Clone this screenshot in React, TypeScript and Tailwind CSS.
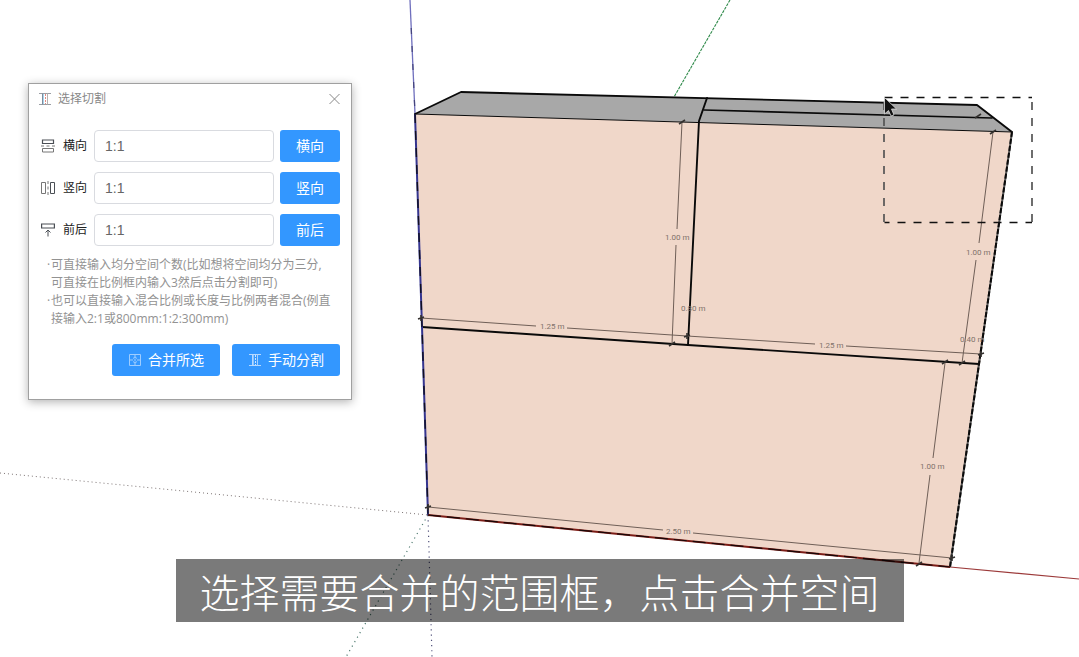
import React, { useState } from 'react';

type Point = [number, number];

const DIMENSION_LINES: [Point, Point][] = [
  [[682, 122], [677, 229]],
  [[676, 245], [672, 344]],
  [[993, 132], [979, 243]],
  [[976, 260], [962, 363]],
  [[945, 363], [933, 458]],
  [[930, 475], [919, 563]],
  [[421, 318], [536, 326]],
  [[567, 328], [687, 336]],
  [[687, 336], [815, 344]],
  [[846, 346], [981, 354]],
  [[428, 507], [663, 530]],
  [[693, 533], [952, 558]],
];

const TICKS: Point[] = [
  [682, 122], [672, 344], [993, 132], [978, 116], [962, 363], [945, 362], [919, 564],
];

const NODES: Point[] = [
  [421, 318], [687, 336], [981, 354], [428, 507], [952, 558],
];

const LABELS: { x: number; y: number; text: string }[] = [
  { x: 665, y: 240, text: '1.00 m' },
  { x: 966, y: 255, text: '1.00 m' },
  { x: 920, y: 469, text: '1.00 m' },
  { x: 540, y: 329, text: '1.25 m' },
  { x: 819, y: 348, text: '1.25 m' },
  { x: 666, y: 534, text: '2.50 m' },
  { x: 681, y: 311, text: '0.80 m' },
  { x: 960, y: 342, text: '0.40 m' },
];

function Scene() {
  return (
    <svg
      className="absolute inset-0 h-full w-full"
      viewBox="0 0 1079 657"
      preserveAspectRatio="xMinYMin slice"
      fill="none"
      aria-hidden="true"
    >
      <path d="M410 0 415 114" stroke="#6f6fbd" strokeWidth="1.3" />
      <path d="M411.200 28 415 114" stroke="#44447c" strokeWidth="1.2" strokeDasharray="6 12" />
      <path d="M730 0 674 97" stroke="#2f8a4a" strokeWidth="1.1" strokeDasharray="3 1" />
      <path d="M0 473 428 515" stroke="#7d7474" strokeDasharray="1 3" />
      <path d="M428 515 346 657" stroke="#4f7a70" strokeWidth="1.2" strokeDasharray="1.2 4" />
      <path d="M428 515 432 657" stroke="#50507a" strokeWidth="1.2" strokeDasharray="1.2 4" />
      <path d="M950 567 1079 579" stroke="#9c3a3a" strokeWidth="1.1" />

      <path d="M415 114 1012 132 980 364 950 567 428 515Z" fill="#f0d7c9" />
      <path d="M415 114 461 92 977 105 1012 132Z" fill="#a8a8a8" />

      <g stroke="#0a0a0a" strokeLinejoin="round" strokeLinecap="round">
        <path d="M415 114 461 92 977 105 1012 132" strokeWidth="1.9" />
        <path d="M415 114 1012 132" strokeWidth="1" />
        <path d="M704 110 992 118" strokeWidth="1.7" />
        <path d="M707 98 699 121 688 345" strokeWidth="1.9" />
        <path d="M422 327 688 345 979 364" strokeWidth="1.9" />
      </g>
      <path d="M1012 132 979 364 950 567" stroke="#555" strokeWidth="2" />
      <path d="M1012 132 979 364 950 567" stroke="#0a0a0a" strokeWidth="2" strokeDasharray="5 2" />
      <path d="M415 114 422 327 428 515" stroke="#35358f" strokeWidth="2" />
      <path d="M415 114 422 327 428 515" stroke="#101022" strokeWidth="1.4" strokeDasharray="9 8" />
      <path d="M428 515 950 567" stroke="#7c1c16" strokeWidth="2" />
      <path d="M428 515 950 567" stroke="#180808" strokeWidth="1.2" strokeDasharray="13 6" />

      <g stroke="#6f5f57" strokeWidth="1">
        {DIMENSION_LINES.map(([a, b]) => (
          <path key={a.join() + b.join()} d={`M${a[0]} ${a[1]} ${b[0]} ${b[1]}`} />
        ))}
      </g>
      <g stroke="#33302e" strokeWidth="1.6">
        {TICKS.map(([x, y]) => (
          <path key={`${x}-${y}`} d={`M${x - 3} ${y + 2}L${x + 3} ${y - 2}`} />
        ))}
        {NODES.map(([x, y]) => (
          <path key={`${x}-${y}`} d={`M${x - 3} ${y + 1}L${x + 3} ${y - 1}M${x} ${y - 3}V${y + 3}`} />
        ))}
      </g>
      <g
        fill="#80726a"
        className="text-[8px]"
        fontFamily="Roboto, 'Noto Sans', sans-serif"
      >
        {LABELS.map((l) => (
          <text key={`${l.x}-${l.y}`} x={l.x} y={l.y}>{l.text}</text>
        ))}
      </g>

      <path d="M884.5 97.5H1032" stroke="#111" strokeWidth="1.4" strokeDasharray="8 8" />
      <path d="M884.5 222.500H1032" stroke="#111" strokeWidth="1.4" strokeDasharray="8 8" strokeDashoffset="3" />
      <path d="M884 102V222" stroke="#555" strokeWidth="1.7" strokeDasharray="8 8" />
      <path d="M1032 102V222" stroke="#555" strokeWidth="1.7" strokeDasharray="8 8" />
      <path
        d="M884.500 97.500V114L888.500 110.500 891 116 894 115 891.500 109H896.500Z"
        fill="#111"
        stroke="#ddd"
        strokeWidth=".8"
      />
    </svg>
  );
}

function BeamIcon({ light = false }: { light?: boolean }) {
  return (
    <svg className="h-3.5 w-3.5 shrink-0" viewBox="0 0 14 14" fill="none" aria-hidden="true">
      <path d="M1 1.500H13M1 12.500H13" stroke={light ? '#b5d8ff' : '#9a9ea4'} />
      <path d="M4.500 1.500V12.500" stroke={light ? '#b5d8ff' : '#7d8c9c'} />
      <path d="M5.500 2V12" stroke={light ? '#8cc4ff' : '#a9d4ee'} />
      <path d="M7.500 2V12" stroke={light ? '#cce4ff' : '#e58a80'} strokeDasharray="2 1" />
      <path d="M9.500 1.500V12.500" stroke={light ? '#a5d0ff' : '#b5b0b0'} />
    </svg>
  );
}

function MergeIcon() {
  return (
    <svg className="h-3.5 w-3.5 shrink-0" viewBox="0 0 14 14" fill="none" stroke="#9fcdff" aria-hidden="true">
      <path d="M1.500 1.500H12.500V12.500H1.500ZM1.500 7H5M9 7H12.500M7 1.500V4M7 10V12.500" />
      <path d="M5 5.500 7 4 9 5.500M5 8.500 7 10 9 8.500M7 5.500V8.500" />
    </svg>
  );
}

function HorizontalIcon() {
  return (
    <svg className="h-3.5 w-3.5 shrink-0" viewBox="0 0 14 14" fill="none" stroke="#4b4f55" aria-hidden="true">
      <path d="M1.500 1H12.500V4.500H1.500Z" strokeWidth="1.2" />
      <path d="M1.500 9.500H12.500V13H1.500Z" stroke="#777" />
      <path d="M0 7H3M5.500 7H8.500M11 7H14" stroke="#777" />
    </svg>
  );
}

function VerticalIcon() {
  return (
    <svg className="h-3.5 w-3.5 shrink-0" viewBox="0 0 14 14" fill="none" stroke="#4b4f55" aria-hidden="true">
      <path d="M.5 1.500H4.500V12.500H.5Z" stroke="#777" />
      <path d="M9.500 1.500H13.500V12.500H9.500Z" />
      <path d="M7 0V3M7 5.500V8.500M7 11V14" stroke="#777" />
    </svg>
  );
}

function DepthIcon() {
  return (
    <svg className="h-3.5 w-3.5 shrink-0" viewBox="0 0 14 14" fill="none" stroke="#4b4f55" aria-hidden="true">
      <path d="M.6 1H13.400V5H.6Z" strokeWidth="1.2" />
      <path d="M7 13.500V7.500M4.500 9.500 7 7 9.500 9.500" />
    </svg>
  );
}

const ROWS = [
  { id: 'horizontal', label: '横向', icon: <HorizontalIcon /> },
  { id: 'vertical', label: '竖向', icon: <VerticalIcon /> },
  { id: 'depth', label: '前后', icon: <DepthIcon /> },
];

const BUTTON = 'flex h-8 items-center justify-center rounded-[3px] bg-[#3397ff] text-sm text-white';

function SplitRow({ id, label, icon }: { id: string; label: string; icon: React.ReactNode }) {
  const [ratio, setRatio] = useState('1:1');
  return (
    <div className="flex items-center">
      <label htmlFor={id} className="flex w-[53px] shrink-0 items-center gap-2 text-xs text-[#222]">
        {icon}
        {label}
      </label>
      <input
        id={id}
        value={ratio}
        onChange={(e) => setRatio(e.target.value)}
        className="mr-1.5 h-8 min-w-0 flex-1 rounded border border-[#d9dbe0] bg-white px-2.5 font-['Liberation_Sans',sans-serif] text-sm text-[#666] outline-none"
      />
      <button type="button" className={`${BUTTON} w-15 shrink-0`}>{label}</button>
    </div>
  );
}

function SplitDialog() {
  return (
    <section
      aria-label="选择切割"
      className="absolute top-[83px] left-7 w-[324px] border border-[#a0a0a0] bg-white pr-[11px] pb-[23px] pl-3 shadow-[0_2px_9px_rgba(0,0,0,0.3)]"
    >
      <header className="-ml-[3px] flex h-[30px] items-center text-xs text-[#888]">
        <BeamIcon />
        <h1 className="ml-1.5">选择切割</h1>
        <button type="button" aria-label="关闭" className="ml-auto text-[#888]">
          <svg className="h-4 w-3" viewBox="0 0 12 16" fill="none" stroke="currentColor" aria-hidden="true">
            <path d="M1.500 3 11.500 13M11.500 3 1.500 13" />
          </svg>
        </button>
      </header>
      <div className="mt-4 flex flex-col gap-2.5">
        {ROWS.map((r) => (
          <SplitRow key={r.id} {...r} />
        ))}
      </div>
      <ul className="mt-2.5 pl-2.5 text-xs leading-[18px] whitespace-nowrap text-[#929292]">
        <li className="relative">
          <span className="absolute -left-1">·</span>
          可直接输入均分空间个数(比如想将空间均分为三分,
          <br />
          可直接在比例框内输入3然后点击分割即可)
        </li>
        <li className="relative">
          <span className="absolute -left-1">·</span>
          也可以直接输入混合比例或长度与比例两者混合(例直
          <br />
          接输入2:1或800mm:1:2:300mm)
        </li>
      </ul>
      <div className="mt-4 flex justify-end gap-3">
        <button type="button" className={`${BUTTON} w-27 gap-1.5`}>
          <MergeIcon />
          合并所选
        </button>
        <button type="button" className={`${BUTTON} w-27 gap-1.5`}>
          <BeamIcon light />
          手动分割
        </button>
      </div>
    </section>
  );
}

export default function App() {
  return (
    <main className="relative min-h-screen overflow-hidden bg-white font-['Open_Sans','Noto_Sans_CJK_SC',sans-serif]">
      <Scene />
      <SplitDialog />
      <div className="absolute inset-x-0 bottom-[35px] flex justify-center">
        <p className="bg-black/52 px-6 pt-1.5 pb-px text-[40px] leading-14 font-light whitespace-nowrap text-white">
          选择需要合并的范围框，点击合并空间
        </p>
      </div>
    </main>
  );
}
